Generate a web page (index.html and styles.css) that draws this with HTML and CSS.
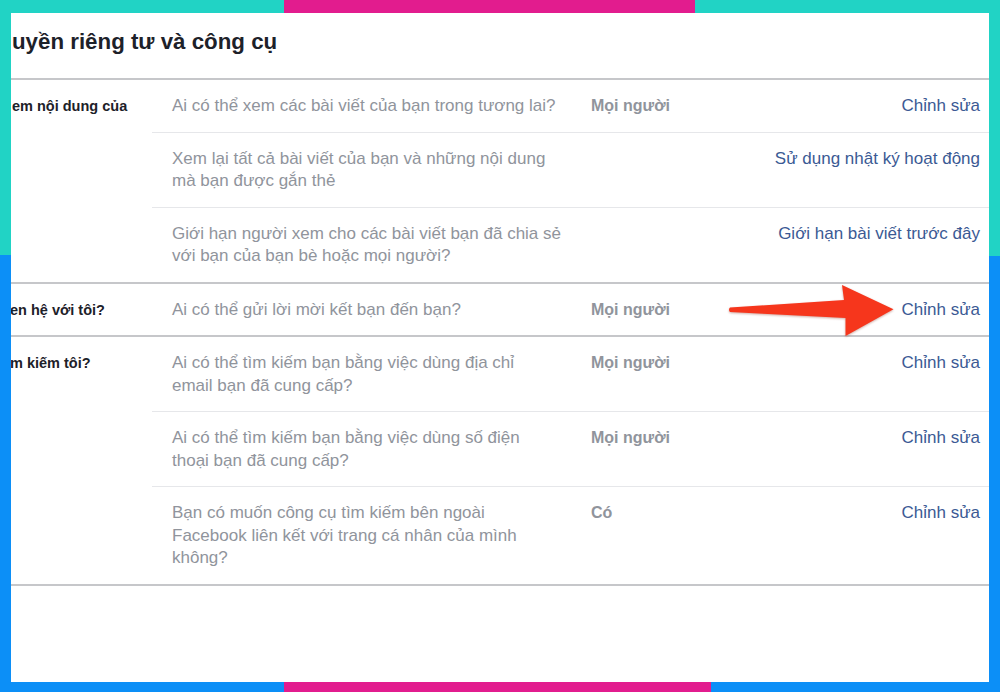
FILE: index.html
```html
<!DOCTYPE html>
<html lang="vi">
<head>
<meta charset="utf-8">
<title>Quyền riêng tư và công cụ</title>
<link rel="stylesheet" href="styles.css">
</head>
<body>
<div class="frame">
  <div class="bar bar-top">
    <span class="seg teal seg-a"></span>
    <span class="seg pink seg-b"></span>
    <span class="seg teal seg-c"></span>
  </div>
  <div class="middle">
    <div class="side side-left">
      <span class="teal side-top"></span>
      <span class="blue side-bottom"></span>
    </div>
    <main class="panel">
      <h1 class="title">uyền riêng tư và công cụ</h1>

      <section class="group">
        <div class="label">em nội dung của</div>
        <div class="rows">
          <div class="row">
            <div class="desc">Ai có thể xem các bài viết của bạn trong tương lai?</div>
            <div class="value">Mọi người</div>
            <a class="action">Chỉnh sửa</a>
          </div>
          <div class="row">
            <div class="desc">Xem lại tất cả bài viết của bạn và những nội dung<br>mà bạn được gắn thẻ</div>
            <div class="value"></div>
            <a class="action">Sử dụng nhật ký hoạt động</a>
          </div>
          <div class="row">
            <div class="desc">Giới hạn người xem cho các bài viết bạn đã chia sẻ<br>với bạn của bạn bè hoặc mọi người?</div>
            <div class="value"></div>
            <a class="action">Giới hạn bài viết trước đây</a>
          </div>
        </div>
      </section>

      <section class="group">
        <div class="label label-cut">en hệ với tôi?</div>
        <div class="rows">
          <div class="row">
            <div class="desc">Ai có thể gửi lời mời kết bạn đến bạn?</div>
            <div class="value">Mọi người</div>
            <a class="action">Chỉnh sửa</a>
          </div>
        </div>
      </section>

      <section class="group">
        <div class="label label-cut">m kiếm tôi?</div>
        <div class="rows">
          <div class="row">
            <div class="desc">Ai có thể tìm kiếm bạn bằng việc dùng địa chỉ<br>email bạn đã cung cấp?</div>
            <div class="value">Mọi người</div>
            <a class="action">Chỉnh sửa</a>
          </div>
          <div class="row">
            <div class="desc">Ai có thể tìm kiếm bạn bằng việc dùng số điện<br>thoại bạn đã cung cấp?</div>
            <div class="value">Mọi người</div>
            <a class="action">Chỉnh sửa</a>
          </div>
          <div class="row">
            <div class="desc">Bạn có muốn công cụ tìm kiếm bên ngoài<br>Facebook liên kết với trang cá nhân của mình<br>không?</div>
            <div class="value">Có</div>
            <a class="action">Chỉnh sửa</a>
          </div>
        </div>
      </section>

      <svg class="arrow" width="170" height="58" viewBox="0 0 170 58" aria-hidden="true">
        <path d="M2,24.5 L116,17 L114,2 L165.5,26.3 L117.5,53 L117.5,35 L2,29 Q0,26.7 2,24.5 Z" fill="#f6361c"/>
      </svg>
    </main>
    <div class="side side-right">
      <span class="teal side-top-r"></span>
      <span class="blue side-bottom"></span>
    </div>
  </div>
  <div class="bar bar-bottom">
    <span class="seg blue seg-a"></span>
    <span class="seg pink seg-d"></span>
    <span class="seg blue seg-c"></span>
  </div>
</div>
</body>
</html>
```

FILE: styles.css
```css
* { box-sizing: border-box; }

html, body {
  margin: 0;
  padding: 0;
  background: #ffffff;
}

body {
  font-family: "Liberation Sans", Arial, sans-serif;
  color: #1d2129;
}

.frame {
  width: 1000px;
  height: 692px;
  display: flex;
  flex-direction: column;
  overflow: hidden;
}

.teal { background: #21d3c5; }
.pink { background: #e21c8e; }
.blue { background: #0c8ff7; }

.bar {
  display: flex;
  flex: none;
}
.bar-top { height: 13px; }
.bar-bottom { height: 10px; }

.seg { display: block; height: 100%; }
.seg-a { width: 284px; }
.seg-b { width: 411px; }
.seg-c { flex: 1; }
.seg-d { width: 427px; }

.middle {
  flex: 1;
  display: flex;
  min-height: 0;
}

.side {
  width: 11px;
  flex: none;
  display: flex;
  flex-direction: column;
}
.side-top { height: 242px; flex: none; }
.side-top-r { height: 243px; flex: none; }
.side-bottom { flex: 1; }

.panel {
  position: relative;
  flex: 1;
  background: #ffffff;
  overflow: hidden;
}

.title {
  margin: 0;
  height: 67px;
  padding: 16px 0 0 1px;
  font-size: 22.3px;
  line-height: 26px;
  font-weight: bold;
  color: #1d2129;
  white-space: nowrap;
  border-bottom: 2px solid #c6c7ca;
}

.group {
  display: grid;
  grid-template-columns: 141px 1fr;
  border-bottom: 2px solid #c6c7ca;
}

.label {
  padding: 15px 0 0 1px;
  font-size: 14.5px;
  line-height: 22.5px;
  font-weight: bold;
  color: #1d2129;
  white-space: nowrap;
}
.label-cut { margin-left: -2px; }

.rows {
  display: flex;
  flex-direction: column;
}

.row {
  display: grid;
  grid-template-columns: 419px 1fr auto;
  padding: 15px 9px 14px 20px;
  border-bottom: 1px solid #e6e7ea;
  font-size: 17px;
  line-height: 22.5px;
}
.row:last-child { border-bottom: none; }

.desc {
  color: #90949c;
  white-space: nowrap;
}

.value {
  color: #90949c;
  font-size: 16px;
  font-weight: bold;
  white-space: nowrap;
}

.action {
  color: #3b5a94;
  white-space: nowrap;
  text-align: right;
  text-decoration: none;
}

.arrow {
  position: absolute;
  left: 717px;
  top: 270px;
  filter: drop-shadow(0 1px 1px rgba(120, 20, 0, 0.35));
}
```
